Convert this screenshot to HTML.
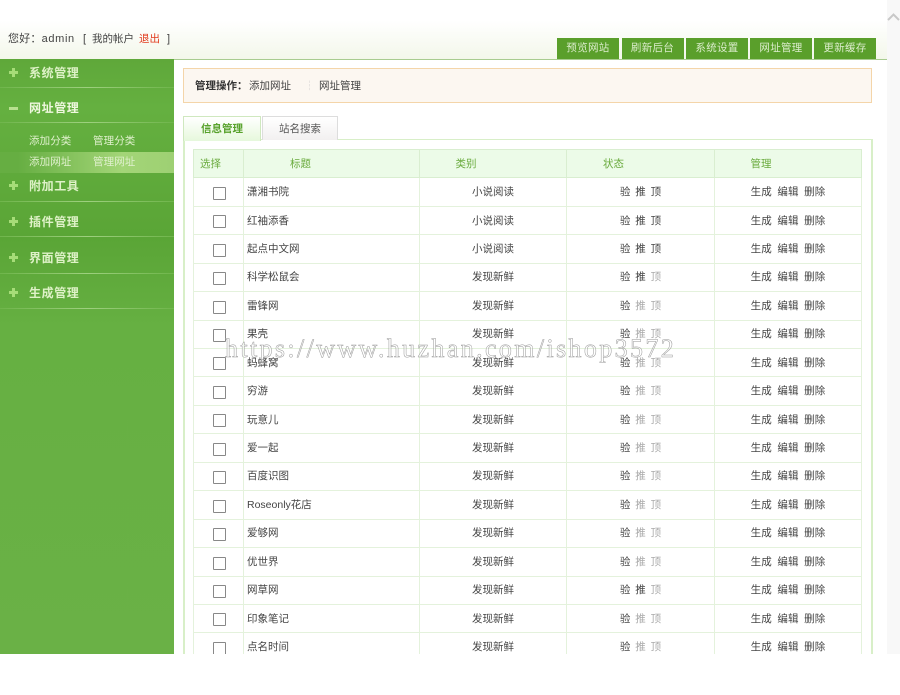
<!DOCTYPE html>
<html lang="zh"><head><meta charset="utf-8"><title>网址管理</title>
<style>
html,body{margin:0;padding:0;width:900px;height:695px;overflow:hidden;background:#fff}
body{position:relative;font-family:"Liberation Sans","WenQuanYi Zen Hei","Noto Sans CJK SC",sans-serif;font-size:10.5px;color:#444}
.a{position:absolute}
#page{position:absolute;left:0;top:0;width:900px;height:654px;overflow:hidden;filter:blur(.35px)}
#scroll{position:absolute;left:887px;top:0;width:13px;height:654px;background:#f8f8f8}
#top{position:absolute;left:0;top:0;width:887px;height:59px;background:linear-gradient(#fff 0,#fff 20px,#f3f7ea 59px);border-bottom:1px solid #a8cc90}
.btn{position:absolute;top:38px;height:21px;width:62px;line-height:21px;text-align:center;background:#5a9f2b;color:#dbeccb;letter-spacing:.3px}
#side{position:absolute;left:0;top:59px;width:174px;height:595px;background:linear-gradient(#5fa83a 0,#65b040 8%,#5aa536 30%,#66b042 45%,#6ab146 100%)}
.m{position:absolute;left:29px;color:#dff2c8;font-weight:bold;font-size:12px;letter-spacing:.6px;line-height:16px}
.l{position:absolute;left:0;width:174px;height:1px;background:linear-gradient(90deg,#6fb54b,#9ed07f 50%,#6fb54b)}
.s{position:absolute;color:#dff0cc;line-height:14px;letter-spacing:.1px}
.c{position:absolute;left:9px;width:9px;height:9px;background:linear-gradient(#a6dc78,#a6dc78) center/3px 9px no-repeat,linear-gradient(#a6dc78,#a6dc78) center/9px 3px no-repeat}
#act{position:absolute;left:183px;top:68px;width:687px;height:33px;background:#fcf7f1;border:1px solid #f4d5a9;line-height:35px}
.tab{position:absolute;top:116px;height:23px;line-height:24px;text-align:center}
#panel{position:absolute;left:183px;top:139px;width:686px;height:530px;border:1px solid #d8efc8;border-width:1.5px 2px}
table{position:absolute;left:193px;top:149.4px;width:668px;border-collapse:collapse;table-layout:fixed}
th,td{border:1px solid #e4f2dc;padding:0;text-align:center;font-weight:normal;height:27.45px;line-height:26px}
th{height:27px;background:#ecfbe8;color:#6aab3e;border-color:#d9eed0}
td.t{text-align:left;padding-left:3px;color:#444}
td.st{word-spacing:2px;padding-right:0}
td.mg{word-spacing:2.5px;letter-spacing:.1px}
.h1{padding-right:16px}.h2{padding-right:62px}.h3{padding-right:54px}
.b{display:inline-block;width:11px;height:11px;border:1px solid #888;background:#fff;vertical-align:middle;margin-top:2px;margin-left:1px;border-radius:1px}
i{font-style:normal;color:#aaa}
#wm{position:absolute;left:225px;top:333px;font-family:"Liberation Serif",serif;font-size:26px;letter-spacing:2.37px;color:rgba(255,255,255,.5);-webkit-text-stroke:.5px #999;white-space:nowrap;line-height:32px}
</style></head><body>
<div id="page">
<div id="scroll"><svg class="a" style="left:0;top:12px" width="13" height="11"><path d="M1 8L6.5 2.5L12 8" fill="none" stroke="#c8c8c8" stroke-width="2"/></svg></div>
<div id="top">
<div class="a" style="left:8px;top:31px;font-size:11px;white-space:nowrap;line-height:16px;color:#444"><span style="letter-spacing:.2px">您好：</span><span style="letter-spacing:.65px">admin</span><span style="position:absolute;left:75px;top:0">[</span><span style="position:absolute;left:84px;top:0;font-size:10.5px">我的帐户</span><span style="position:absolute;left:131px;top:0;color:#e2391c;font-size:10.5px">退出</span><span style="position:absolute;left:159px;top:0">]</span></div>
<div class="btn" style="left:557px">预览网站</div>
<div class="btn" style="left:621.5px">刷新后台</div>
<div class="btn" style="left:686px">系统设置</div>
<div class="btn" style="left:750px">网址管理</div>
<div class="btn" style="left:814px">更新缓存</div>
</div>
<div id="side">
<div class="c" style="top:9px"></div><div class="m" style="top:6px">系统管理</div><div class="l" style="top:28px"></div>
<div class="a" style="left:9px;top:48px;width:9px;height:3px;background:#b8e090"></div><div class="m" style="top:41px;color:#f0f8e0">网址管理</div><div class="l" style="top:63px"></div>
<div class="s" style="left:29px;top:75px">添加分类</div><div class="s" style="left:93px;top:75px">管理分类</div>
<div class="a" style="left:0;top:93px;width:174px;height:21px;background:linear-gradient(90deg,#66ae42 10%,#a3d577 70%,#9ed073)"></div>
<div class="s" style="left:29px;top:96px">添加网址</div><div class="s" style="left:93px;top:96px">管理网址</div>
<div class="c" style="top:122px"></div><div class="m" style="top:119px">附加工具</div><div class="l" style="top:142px"></div>
<div class="c" style="top:158px"></div><div class="m" style="top:155px">插件管理</div><div class="l" style="top:177px"></div>
<div class="c" style="top:194px"></div><div class="m" style="top:191px">界面管理</div><div class="l" style="top:214px"></div>
<div class="c" style="top:229px"></div><div class="m" style="top:226px">生成管理</div><div class="l" style="top:249px"></div>
</div>
<div id="act"><b style="position:absolute;left:11px;color:#333;font-size:10.5px">管理操作：</b><span style="position:absolute;left:65px">添加网址</span><span style="position:absolute;left:120px;color:#ccc">┆</span><span style="position:absolute;left:135px">网址管理</span></div>
<div id="panel"></div>
<div class="tab" style="left:183px;width:76px;height:24px;background:linear-gradient(#fff,#e6f8dc);border:1px solid #cfe8bf;border-bottom:0;color:#58a22c;font-weight:bold;z-index:2">信息管理</div>
<div class="tab" style="left:262px;width:74px;background:linear-gradient(#fff,#f2f0f0);border:1px solid #ddd;border-bottom:0;color:#555;z-index:2">站名搜索</div>
<table>
<colgroup><col style="width:50px"><col style="width:176px"><col style="width:147px"><col style="width:148px"><col style="width:147px"></colgroup>
<tr><th class="h1">选择</th><th class="h2">标题</th><th class="h3">类别</th><th class="h3">状态</th><th class="h3">管理</th></tr>
<tr><td><span class="b"></span></td><td class="t">潇湘书院</td><td>小说阅读</td><td class="st">验 推 顶</td><td class="mg">生成 编辑 删除</td></tr>
<tr><td><span class="b"></span></td><td class="t">红袖添香</td><td>小说阅读</td><td class="st">验 推 顶</td><td class="mg">生成 编辑 删除</td></tr>
<tr><td><span class="b"></span></td><td class="t">起点中文网</td><td>小说阅读</td><td class="st">验 推 顶</td><td class="mg">生成 编辑 删除</td></tr>
<tr><td><span class="b"></span></td><td class="t">科学松鼠会</td><td>发现新鲜</td><td class="st">验 推 <i>顶</i></td><td class="mg">生成 编辑 删除</td></tr>
<tr><td><span class="b"></span></td><td class="t">雷锋网</td><td>发现新鲜</td><td class="st">验 <i>推 顶</i></td><td class="mg">生成 编辑 删除</td></tr>
<tr><td><span class="b"></span></td><td class="t">果壳</td><td>发现新鲜</td><td class="st">验 <i>推 顶</i></td><td class="mg">生成 编辑 删除</td></tr>
<tr><td><span class="b"></span></td><td class="t">蚂蜂窝</td><td>发现新鲜</td><td class="st">验 <i>推 顶</i></td><td class="mg">生成 编辑 删除</td></tr>
<tr><td><span class="b"></span></td><td class="t">穷游</td><td>发现新鲜</td><td class="st">验 <i>推 顶</i></td><td class="mg">生成 编辑 删除</td></tr>
<tr><td><span class="b"></span></td><td class="t">玩意儿</td><td>发现新鲜</td><td class="st">验 <i>推 顶</i></td><td class="mg">生成 编辑 删除</td></tr>
<tr><td><span class="b"></span></td><td class="t">爱一起</td><td>发现新鲜</td><td class="st">验 <i>推 顶</i></td><td class="mg">生成 编辑 删除</td></tr>
<tr><td><span class="b"></span></td><td class="t">百度识图</td><td>发现新鲜</td><td class="st">验 <i>推 顶</i></td><td class="mg">生成 编辑 删除</td></tr>
<tr><td><span class="b"></span></td><td class="t">Roseonly花店</td><td>发现新鲜</td><td class="st">验 <i>推 顶</i></td><td class="mg">生成 编辑 删除</td></tr>
<tr><td><span class="b"></span></td><td class="t">爱够网</td><td>发现新鲜</td><td class="st">验 <i>推 顶</i></td><td class="mg">生成 编辑 删除</td></tr>
<tr><td><span class="b"></span></td><td class="t">优世界</td><td>发现新鲜</td><td class="st">验 <i>推 顶</i></td><td class="mg">生成 编辑 删除</td></tr>
<tr><td><span class="b"></span></td><td class="t">网草网</td><td>发现新鲜</td><td class="st">验 推 <i>顶</i></td><td class="mg">生成 编辑 删除</td></tr>
<tr><td><span class="b"></span></td><td class="t">印象笔记</td><td>发现新鲜</td><td class="st">验 <i>推 顶</i></td><td class="mg">生成 编辑 删除</td></tr>
<tr><td><span class="b"></span></td><td class="t">点名时间</td><td>发现新鲜</td><td class="st">验 <i>推 顶</i></td><td class="mg">生成 编辑 删除</td></tr>
</table>
<div id="wm">https://www.huzhan.com/ishop3572</div>
</div>
</body></html>
